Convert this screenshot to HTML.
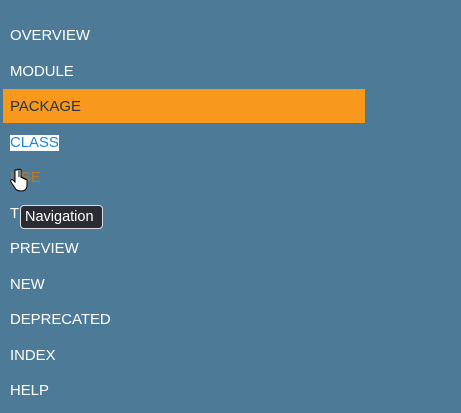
<!DOCTYPE html>
<html><head><style>
body{margin:0;width:461px;height:413px;background:#4d7a97;font-family:"Liberation Sans",sans-serif;font-size:14.9px;color:#fff;position:relative;overflow:hidden}
.i{position:absolute;left:10px;line-height:16px;height:16px;margin-top:1px}
.pk{position:absolute;left:3px;top:89px;width:362px;height:34px;background:#f8981d}
.tip{position:absolute;left:20px;top:205px;width:73px;background:#2b2b33;border:1px solid #ddd;border-radius:4px;color:#fff;font-size:14.5px;padding:3px 4px;line-height:16px}
</style></head><body>
<div class="i" style="top:27px">OVERVIEW</div>
<div class="i" style="top:63px">MODULE</div>
<div class="pk"></div>
<div class="i" style="top:98px;color:#253441">PACKAGE</div>
<div class="i" style="top:134px;background:#fff;color:#1a86e0">CLASS</div>
<div class="i" style="top:169px;color:#bb7a2a">USE</div>
<div class="i" style="top:205px">TREE</div>
<div class="tip">Navigation</div>
<svg style="position:absolute;left:10px;top:168px" width="20" height="24" viewBox="0 0 20 24"><path d="M5 2v12l-2-2c-1-1-3 0-2 2l4 6c1 2 3 3 6 3c4 0 6-2 6-6v-5c0-1-2-1-2 0v-1c0-1-2-1-2 0v-1c0-1-2-1-2 0V2c0-1-2-1-2 0v7V2c0-1-2-1-2 0z" fill="#fff" stroke="#000" stroke-width="1"/></svg>
<div class="i" style="top:240px">PREVIEW</div>
<div class="i" style="top:276px">NEW</div>
<div class="i" style="top:311px">DEPRECATED</div>
<div class="i" style="top:347px">INDEX</div>
<div class="i" style="top:382px">HELP</div>
</body></html>
